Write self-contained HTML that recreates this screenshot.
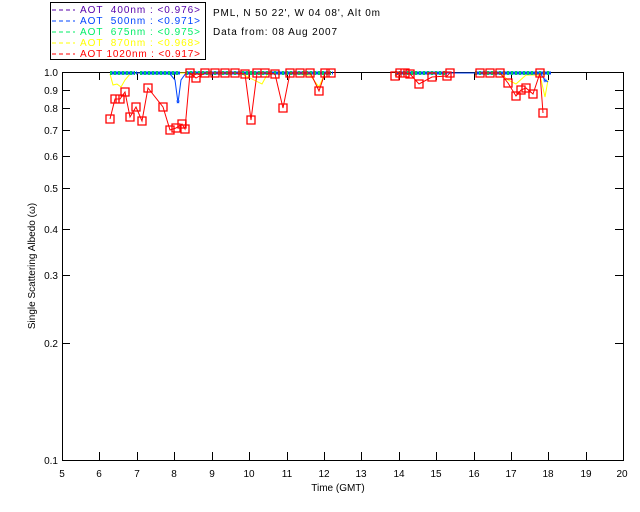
<!DOCTYPE html>
<html><head><style>
body{margin:0;background:#fff;}
svg text{font-family:"Liberation Sans",sans-serif;}
</style></head><body>
<svg width="640" height="512" xmlns="http://www.w3.org/2000/svg" style="display:block">
<defs><symbol id="s" viewBox="0 0 10 10" overflow="visible"><rect x="-4" y="-4" width="9" height="9" fill="none" stroke="#ff0000" stroke-width="1.3"/></symbol></defs>
<rect width="640" height="512" fill="#fff"/>
<rect x="50.5" y="2.5" width="155" height="57" fill="none" stroke="#000" stroke-width="1"/>
<g font-size="10">
<line x1="52" y1="10" x2="75" y2="10" stroke="#5500aa" stroke-dasharray="4,3"/>
<text x="80" y="13" fill="#5500aa" xml:space="preserve" textLength="120" lengthAdjust="spacing">AOT  400nm : &lt;0.976&gt;</text>
<line x1="52" y1="21" x2="75" y2="21" stroke="#0044ff" stroke-dasharray="4,3"/>
<text x="80" y="24" fill="#0044ff" xml:space="preserve" textLength="120" lengthAdjust="spacing">AOT  500nm : &lt;0.971&gt;</text>
<line x1="52" y1="32" x2="75" y2="32" stroke="#00ee66" stroke-dasharray="4,3"/>
<text x="80" y="35" fill="#00ee66" xml:space="preserve" textLength="120" lengthAdjust="spacing">AOT  675nm : &lt;0.975&gt;</text>
<line x1="52" y1="43" x2="75" y2="43" stroke="#ffff00" stroke-dasharray="4,3"/>
<text x="80" y="46" fill="#ffff00" xml:space="preserve" textLength="120" lengthAdjust="spacing">AOT  870nm : &lt;0.968&gt;</text>
<line x1="52" y1="54" x2="75" y2="54" stroke="#ff0000" stroke-dasharray="4,3"/>
<text x="80" y="57" fill="#ff0000" xml:space="preserve" textLength="120" lengthAdjust="spacing">AOT 1020nm : &lt;0.917&gt;</text>
<text x="213" y="16" fill="#000" textLength="167" lengthAdjust="spacing">PML, N 50 22', W 04 08', Alt 0m</text>
<text x="213" y="35" fill="#000" textLength="124" lengthAdjust="spacing">Data from: 08 Aug 2007</text>
</g>
<g stroke="#000" stroke-width="1" fill="none">
<rect x="62.5" y="72.5" width="561" height="388"/>
<path d="M99.5 460v-8M137.5 460v-8M174.5 460v-8M212.5 460v-8M249.5 460v-8M287.5 460v-8M324.5 460v-8M361.5 460v-8M399.5 460v-8M436.5 460v-8M474.5 460v-8M511.5 460v-8M548.5 460v-8M586.5 460v-8"/>
<path d="M99.5 72v8M137.5 72v8M174.5 72v8M212.5 72v8M249.5 72v8M287.5 72v8M324.5 72v8M361.5 72v8M399.5 72v8M436.5 72v8M474.5 72v8M511.5 72v8M548.5 72v8M586.5 72v8"/>
<path d="M62 72.5h8M62 90.5h8M62 108.5h8M62 130.5h8M62 156.5h8M62 188.5h8M62 229.5h8M62 275.5h8M62 343.5h8M62 460.5h8"/>
<path d="M623 90.5h-8M623 108.5h-8M623 130.5h-8M623 156.5h-8M623 188.5h-8M623 229.5h-8M623 275.5h-8M623 343.5h-8"/>
</g>
<g font-size="10" fill="#000" text-anchor="end">
<text x="58" y="76">1.0</text><text x="58" y="94">0.9</text><text x="58" y="112">0.8</text><text x="58" y="134">0.7</text><text x="58" y="160">0.6</text><text x="58" y="192">0.5</text><text x="58" y="233">0.4</text><text x="58" y="279">0.3</text><text x="58" y="347">0.2</text><text x="58" y="464">0.1</text>
</g>
<g font-size="10" fill="#000" text-anchor="middle">
<text x="62" y="477">5</text><text x="99" y="477">6</text><text x="137" y="477">7</text><text x="174" y="477">8</text><text x="212" y="477">9</text><text x="249" y="477">10</text><text x="287" y="477">11</text><text x="324" y="477">12</text><text x="361" y="477">13</text><text x="399" y="477">14</text><text x="436" y="477">15</text><text x="474" y="477">16</text><text x="511" y="477">17</text><text x="548" y="477">18</text><text x="586" y="477">19</text><text x="622" y="477">20</text>
<text x="338" y="491">Time (GMT)</text>
<text transform="translate(35 266) rotate(-90)">Single Scattering Albedo (ω)</text>
</g>
<polyline fill="none" stroke="#ffff00" points="110,74 113,85 117,84 121,87 125,80 130,74 140,73 150,74 160,73 200,73 240,73 262,84 268,73 310,75 319,87 325,73 331,73"/>
<polyline fill="none" stroke="#ffff00" points="395,74 440,73 500,73 508,80 516,84 526,75 540,75 545,97 548,80"/>
<polyline fill="none" stroke="#0044ff" points="110,73 150,73 170,74 175,80 178,103 181,80 186,73 330,73"/>
<polyline fill="none" stroke="#0044ff" points="395,73 540,73 545,80 548,82"/>
<g fill="none" stroke-width="4" stroke-dasharray="2,2">
<path d="M110 73h25M140 73h40M186 73h145M395 73h50M475 73h75" stroke="#00cc66"/>
<path d="M112 73h25M142 73h40M188 73h145M397 73h50M477 73h75" stroke="#0044ff" stroke-width="3"/>
</g>
<text x="178" y="107" font-size="11" fill="#0044ff" text-anchor="middle">*</text>
<text x="545" y="86" font-size="11" fill="#0044ff" text-anchor="middle">*</text>
<polyline fill="none" stroke="#ff0000" points="110,119 115,99 120,99 125,92 130,117 136,107 142,121 148,88 163,107 170,130 176,128 182,124 185,129 190,73 196,78 205,73 215,73 225,73 235,73 245,74 251,120 257,73 265,73 275,74 283,108 290,73 300,73 310,73 312,76 319,91 325,73 331,73"/>
<polyline fill="none" stroke="#ff0000" points="395,76 400,73 405,73 410,74 419,84 432,77 447,76 450,73"/>
<polyline fill="none" stroke="#ff0000" points="480,73 490,73 500,73 508,83 516,96 521,90 526,88 533,94 540,73 543,113"/>
<g fill="none" stroke="#ff0000" stroke-width="1.3">
<path d="M106 115h8v8h-8zM111 95h8v8h-8zM116 95h8v8h-8zM121 88h8v8h-8zM126 113h8v8h-8zM132 103h8v8h-8zM138 117h8v8h-8zM144 84h8v8h-8zM159 103h8v8h-8zM166 126h8v8h-8zM172 124h8v8h-8zM178 120h8v8h-8zM181 125h8v8h-8zM186 69h8v8h-8zM192 74h8v8h-8zM201 69h8v8h-8zM211 69h8v8h-8zM221 69h8v8h-8zM231 69h8v8h-8zM241 70h8v8h-8zM247 116h8v8h-8zM253 69h8v8h-8zM261 69h8v8h-8zM271 70h8v8h-8zM279 104h8v8h-8zM286 69h8v8h-8zM296 69h8v8h-8zM306 69h8v8h-8zM315 87h8v8h-8zM321 69h8v8h-8zM327 69h8v8h-8z"/>
<path d="M391 72h8v8h-8zM396 69h8v8h-8zM401 69h8v8h-8zM406 70h8v8h-8zM415 80h8v8h-8zM428 73h8v8h-8zM443 72h8v8h-8zM446 69h8v8h-8z"/>
<path d="M476 69h8v8h-8zM486 69h8v8h-8zM496 69h8v8h-8zM504 79h8v8h-8zM512 92h8v8h-8zM517 86h8v8h-8zM522 84h8v8h-8zM529 90h8v8h-8zM536 69h8v8h-8zM539 109h8v8h-8z"/>
</g>
</svg>
</body></html>
